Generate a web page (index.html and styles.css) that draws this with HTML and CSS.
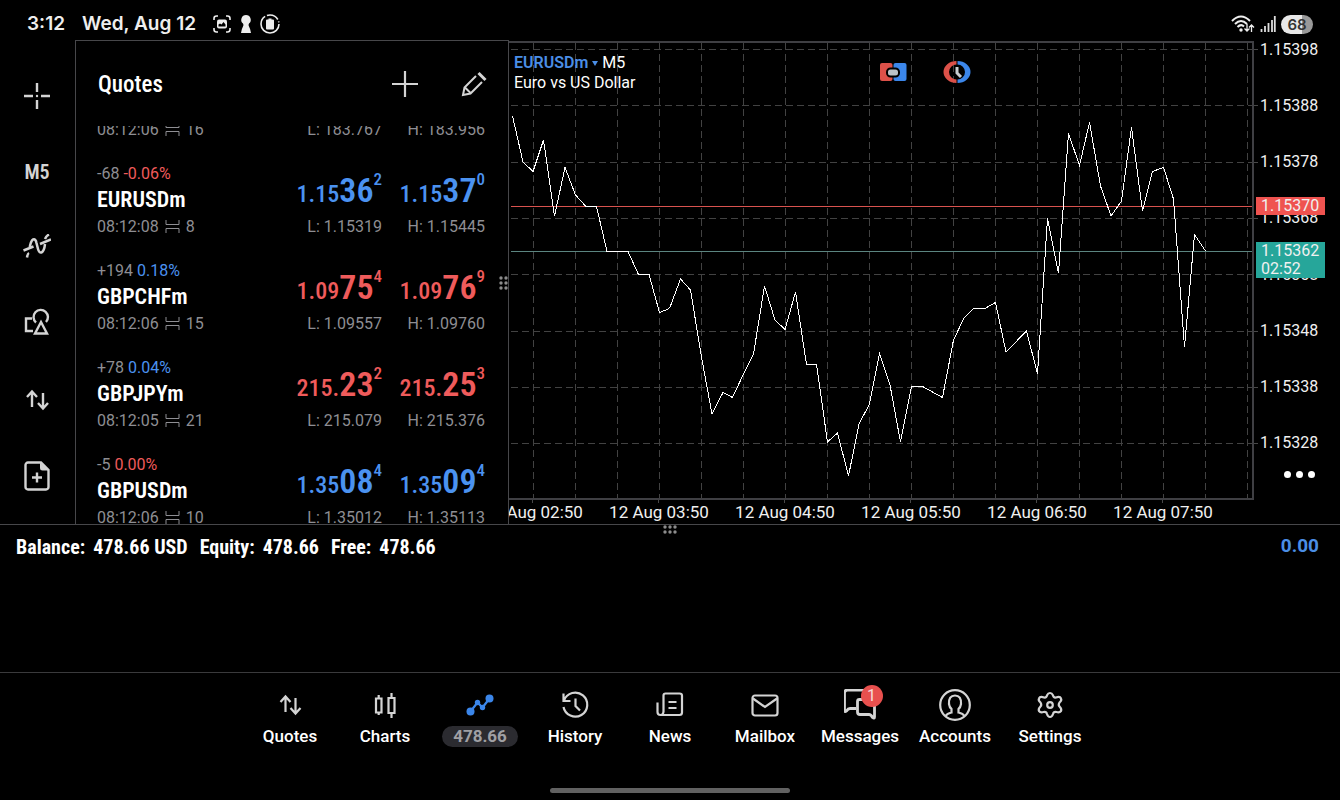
FILE: index.html
```html
<!DOCTYPE html>
<html lang="en">
<head>
<meta charset="utf-8">
<meta name="viewport" content="width=device-width, initial-scale=1">
<title>EURUSDm M5</title>
<link rel="stylesheet" href="styles.css">
</head>
<body>
<div class="app">
  <header class="status">
    <time class="clock">3:12</time>
    <span class="date">Wed, Aug 12</span>
    <span class="status-icons">
      <svg width="20" height="20" viewBox="0 0 20 20"><path d="M2 6V4.500Q2 2 4.500 2H6M14 2h1.500Q18 2 18 4.500V6M18 14v1.500Q18 18 15.500 18H14M6 18H4.500Q2 18 2 15.500V14" fill="none" stroke="#eee" stroke-width="1.600"/><rect x="5" y="5.500" width="10" height="9" rx="2" fill="#eee"/><path d="M6.500 12.500v-2l1.500-1 1.500 1 2-2.500 2 2.500v2z" fill="#000"/></svg>
      <svg width="12" height="20" viewBox="0 0 12 20"><path d="M6 1a4.800 4.800 0 0 1 3 8.500Q8 11 9 12.500q1.500 2.500 2 6.500H1q.5-4 2-6.500 1-1.500 0-3A4.800 4.800 0 0 1 6 1z" fill="#eee"/></svg>
      <svg width="20" height="20" viewBox="0 0 20 20"><circle cx="10" cy="10" r="9" fill="none" stroke="#eee" stroke-width="1.600" stroke-dasharray="37 2 12.500 2 1 2"/><path d="M8.500 4.500h3v1H13q1 0 1 1v8q0 1-1 1H7q-1 0-1-1v-8q0-1 1-1h1.500z" fill="#eee"/></svg>
    </span>
    <span class="status-right">
      <svg width="24" height="20" viewBox="0 0 24 20"><g fill="none" stroke="#eee" stroke-width="2"><path d="M1 7Q10-2 19 7M4 10q6-6 12 0M6.500 13q3.500-3.500 6.500-.5"/><path d="M16 10v7m-2.500-2.500L16 17l2.500-2.500M20.500 18v-7M18 13.500l2.500-2.500 2.500 2.500" stroke-width="1.300"/></g><circle cx="10" cy="16" r="1.700" fill="#eee"/></svg>
      <svg width="16" height="18" viewBox="0 0 16 18"><path d="M1.500 17v-3M5 17v-6M8.500 17V8M12 17V5M14.800 17V1" stroke="#ddd" stroke-width="1.800"/></svg>
      <span class="battery">68</span>
    </span>
  </header>

  <main class="workspace">
    <nav class="tools" aria-label="Chart tools">
      <button aria-label="Crosshair"><svg width="28" height="28" viewBox="0 0 28 28"><path d="M14 1v9M14 18v9M1 14h9M18 14h9" stroke="#d4d4d4" stroke-width="2.400"/><circle cx="14" cy="14" r="1.200" fill="#d4d4d4"/></svg></button>
      <button class="period">M5</button>
      <button aria-label="Indicators"><svg width="28" height="28" viewBox="0 0 28 28"><g fill="none" stroke="#d4d4d4" stroke-width="2.500"><path d="M.5 16.500l10-4M17 10L28 5.500M4 23.500c.3-2 1-4 2-4.500M22 5c1-2.500 2-3.500 4-4.500M6.500 15C8 3.500 12.500 3 13.500 9l1.500 6c1.500 6 6 4.500 7-5"/></g></svg></button>
      <button aria-label="Objects"><svg width="28" height="32" viewBox="0 0 28 32"><g fill="none" stroke="#d4d4d4" stroke-width="2.400"><path d="M9 10.500H3V23h7"/><path d="M13 14.500a7.200 7.200 0 1 1 10-.5"/><path d="M18 14l6 11.500H12z"/></g></svg></button>
      <button aria-label="Trade"><svg width="26" height="22" viewBox="0 0 26 22"><path d="M8 18V3M3 8l5-5.500L13 8M19 4v15M14 14l5 5.500 5-5.500" fill="none" stroke="#d4d4d4" stroke-width="2.400"/></svg></button>
      <button aria-label="New order"><svg width="26" height="30" viewBox="0 0 26 30"><path d="M4 1.500h13L24.500 9v17a2.500 2.500 0 0 1-2.500 2.500H4A2.500 2.500 0 0 1 1.500 26V4A2.500 2.500 0 0 1 4 1.500zM13 11.500v10M8 16.500h10" fill="none" stroke="#d4d4d4" stroke-width="2.400"/><path d="M16 1.500V7q0 2.500 2.500 2.500h6z" fill="#d4d4d4"/></svg></button>
    </nav>

    <section class="quotes">
      <header class="quotes-head">
        <h1>Quotes</h1>
        <button aria-label="Add symbol"><svg width="28" height="28" viewBox="0 0 28 28"><path d="M14 1v26M1 14h26" stroke="#d4d4d4" stroke-width="2.200"/></svg></button>
        <button aria-label="Edit list"><svg width="26" height="26" viewBox="0 0 26 26"><path d="M15 5L3.500 16.500 2 24l7.500-1.500L21 11M4 16.500l5.500 5.500" fill="none" stroke="#d4d4d4" stroke-width="2"/><path d="M17.500 2l7 7" stroke="#d4d4d4" stroke-width="3"/></svg></button>
      </header>
      <div class="list-view">
        <ul class="quote-list">
          <li class="quote cut"><span class="time">08:12:06 <svg class="spread" viewBox="0 0 15 13"><path d="M1 0v4.500h13V0M1 13V8.500h13V13"/></svg> 16</span><span class="low">L: 183.767</span><span class="high">H: 183.956</span></li>
          <li class="quote">
            <span class="change">-68 <b class="down">-0.06%</b></span><span class="symbol">EURUSDm</span>
            <span class="bid up">1.15<b>36</b><sup>2</sup></span><span class="ask up">1.15<b>37</b><sup>0</sup></span>
            <span class="time">08:12:08 <svg class="spread" viewBox="0 0 15 13"><path d="M1 0v4.500h13V0M1 13V8.500h13V13"/></svg> 8</span><span class="low">L: 1.15319</span><span class="high">H: 1.15445</span>
          </li>
          <li class="quote">
            <span class="change">+194 <b class="up">0.18%</b></span><span class="symbol">GBPCHFm</span>
            <span class="bid down">1.09<b>75</b><sup>4</sup></span><span class="ask down">1.09<b>76</b><sup>9</sup></span>
            <span class="time">08:12:06 <svg class="spread" viewBox="0 0 15 13"><path d="M1 0v4.500h13V0M1 13V8.500h13V13"/></svg> 15</span><span class="low">L: 1.09557</span><span class="high">H: 1.09760</span>
          </li>
          <li class="quote">
            <span class="change">+78 <b class="up">0.04%</b></span><span class="symbol">GBPJPYm</span>
            <span class="bid down">215.<b>23</b><sup>2</sup></span><span class="ask down">215.<b>25</b><sup>3</sup></span>
            <span class="time">08:12:05 <svg class="spread" viewBox="0 0 15 13"><path d="M1 0v4.500h13V0M1 13V8.500h13V13"/></svg> 21</span><span class="low">L: 215.079</span><span class="high">H: 215.376</span>
          </li>
          <li class="quote">
            <span class="change">-5 <b class="down">0.00%</b></span><span class="symbol">GBPUSDm</span>
            <span class="bid up">1.35<b>08</b><sup>4</sup></span><span class="ask up">1.35<b>09</b><sup>4</sup></span>
            <span class="time">08:12:06 <svg class="spread" viewBox="0 0 15 13"><path d="M1 0v4.500h13V0M1 13V8.500h13V13"/></svg> 10</span><span class="low">L: 1.35012</span><span class="high">H: 1.35113</span>
          </li>
        </ul>
      </div>
      <svg class="grip side" width="10" height="16" viewBox="0 0 10 16"><g fill="#8c8c8c"><circle cx="2" cy="3" r="1.700"/><circle cx="7" cy="3" r="1.700"/><circle cx="2" cy="8" r="1.700"/><circle cx="7" cy="8" r="1.700"/><circle cx="2" cy="13" r="1.700"/><circle cx="7" cy="13" r="1.700"/></g></svg>
    </section>

    <section class="chart" aria-label="EURUSDm M5 chart">
      <div class="plot">
        <svg class="plot-lines" viewBox="509 40 749 463" preserveAspectRatio="none">
          <g class="grid">
            <path d="M511 49.500H1252M511 105.500H1252M511 162.500H1252M511 218.500H1252M511 274.500H1252M511 331.500H1252M511 387.500H1252M511 443.500H1252"/>
            <path d="M533.500 43V498M575.500 43V498M617.500 43V498M659.500 43V498M701.500 43V498M743.500 43V498M785.500 43V498M827.500 43V498M869.500 43V498M911.500 43V498M953.500 43V498M995.500 43V498M1037.500 43V498M1079.500 43V498M1121.500 43V498M1163.500 43V498M1205.500 43V498M1247.500 43V498"/>
          </g>
          <path class="ticks" d="M1253 49.500h5M1253 105.500h5M1253 162.500h5M1253 218.500h5M1253 331.500h5M1253 387.500h5M1253 443.500h5M532.500 499v4M658.500 499v4M784.500 499v4M910.500 499v4M1036.500 499v4M1162.500 499v4"/>
          <path class="frame" d="M509 42H1253V499H509"/>
          <path class="ask-line" d="M511 206.500H1252"/>
          <path class="bid-line" d="M511 251.500H1252"/>
          <polyline class="price" points="512.500,116 523,162 533,171.500 543.500,140 554.500,216 565,167.500 575.500,195 586,206.500 596.500,206.500 607,251.500 628,251.500 638.500,274.500 649,274.500 659.500,312.500 669.500,308.500 680.500,279 690.500,290 701.500,357 712,414 723,392.500 732.500,397.500 743.500,374 753.500,354 764.500,286 775,320 785,329.500 795.500,292 806.500,364.500 816.500,364.500 827.500,442 837.500,433 848.500,476 859,424 869.500,404 879.500,353.500 890,385 900.500,442 911.500,386.500 922.500,386.500 942.500,397.500 953.500,340 964,318 973.500,308.500 985,308.500 995.500,302.500 1006,352 1026.500,331 1037.500,374 1047.500,218 1058.500,273 1068.500,133.500 1079.500,165.500 1089.500,122.500 1100.500,186 1111,216 1121.500,201 1131.500,127.500 1142.500,211 1152.500,171.500 1163.500,167.500 1173.500,199 1184.500,347 1194.500,234.500 1205.500,251"/>
        </svg>
        <div class="chart-title">
          <div><button class="pair">EURUSDm <i></i></button> M5</div>
          <div>Euro vs US Dollar</div>
        </div>
        <div class="chart-actions">
          <button aria-label="One-click trading"><svg width="28" height="24" viewBox="0 0 28 24"><rect x="1" y="3" width="12.500" height="18" rx="2" fill="#dc5149"/><rect x="14.500" y="3" width="13" height="18" rx="2" fill="#3b86ea"/><rect x="8" y="8.500" width="12" height="8" rx="3.500" fill="#bcc3c8" stroke="#000" stroke-width="2"/></svg></button>
          <button aria-label="Market depth"><svg width="28" height="24" viewBox="0 0 28 24"><path d="M13.500 1A13 11 0 0 0 13.500 23V19.500A7.500 7.500 0 0 1 13.500 4.500z" fill="#dc5149"/><path d="M14.500 1A13 11 0 0 1 14.500 23V19.500A7.500 7.500 0 0 0 14.500 4.500z" fill="#3b86ea"/><path d="M14 7v6l4 4" fill="none" stroke="#c8cdd0" stroke-width="3"/></svg></button>
        </div>
      </div>
      <div class="y-axis">
        <ol><li>1.15398</li><li>1.15388</li><li>1.15378</li><li>1.15368</li><li>1.15358</li><li>1.15348</li><li>1.15338</li><li>1.15328</li></ol>
        <span class="tag ask-tag">1.15370</span>
        <span class="tag bid-tag">1.15362<br>02:52</span>
        <button class="more" aria-label="More"><i></i><i></i><i></i></button>
      </div>
      <ol class="x-axis"><li>12 Aug 02:50</li><li>12 Aug 03:50</li><li>12 Aug 04:50</li><li>12 Aug 05:50</li><li>12 Aug 06:50</li><li>12 Aug 07:50</li></ol>
    </section>
  </main>

  <section class="account">
    <svg class="grip top" width="16" height="10" viewBox="0 0 16 10"><g fill="#8c8c8c"><circle cx="3" cy="2" r="1.700"/><circle cx="8" cy="2" r="1.700"/><circle cx="13" cy="2" r="1.700"/><circle cx="3" cy="7" r="1.700"/><circle cx="8" cy="7" r="1.700"/><circle cx="13" cy="7" r="1.700"/></g></svg>
    <dl>
      <div><dt>Balance:</dt><dd>478.66 USD</dd></div>
      <div><dt>Equity:</dt><dd>478.66</dd></div>
      <div><dt>Free:</dt><dd>478.66</dd></div>
    </dl>
    <output class="profit">0.00</output>
  </section>

  <footer class="bottom">
    <nav class="tabs">
      <a href="#quotes"><svg width="32" height="32" viewBox="0 0 32 32"><path d="M11.500 23V8M6.500 13l5-5.500 5 5.500M21.500 9v15M16.500 19l5 5.500 5-5.500"/></svg><span>Quotes</span></a>
      <a href="#charts"><svg width="32" height="32" viewBox="0 0 32 32"><path d="M7 9.500h5.500v14H7zM9.700 6v3.500M9.700 23.500V26M19.500 9h6v15h-6zM22.500 4v5M22.500 24v5"/></svg><span>Charts</span></a>
      <a href="#trade" class="active"><svg width="32" height="32" viewBox="0 0 32 32"><g fill="#3b86ea" stroke="none"><circle cx="6.500" cy="22.500" r="4"/><circle cx="13.500" cy="13.500" r="2.700"/><circle cx="18.500" cy="18.500" r="2.700"/><circle cx="25.500" cy="9.500" r="4"/></g><path d="M6.500 22.500l7-9 5 5 7-9"/></svg><span>478.66</span></a>
      <a href="#history"><svg width="32" height="32" viewBox="0 0 32 32"><path d="M5 11.500A12 12 0 1 1 4.500 18M4.500 4.500v7.500h7M16.500 9.500v7.500l4.500 4.500"/></svg><span>History</span></a>
      <a href="#news"><svg width="32" height="32" viewBox="0 0 32 32"><path d="M9.500 23V6.500q0-2 2-2h14q2.500 0 2.500 2v17q0 2.500-2.500 2.500H6.500q-3 0-3-3V13.500M9.500 22q0 4-3 4M14.500 13h8M14.500 19h8"/></svg><span>News</span></a>
      <a href="#mailbox"><svg width="32" height="32" viewBox="0 0 32 32"><rect x="3.500" y="6.500" width="25" height="20" rx="2.500"/><path d="M4 9.500l12 8.500 12-8.500"/></svg><span>Mailbox</span></a>
      <a href="#messages"><svg width="32" height="32" viewBox="0 0 32 32"><g stroke-width="2.800"><path d="M12 19.500H6q-2 0-3.500 2.500-2 1.500-2-1V4q0-3 3-3h20q3 0 3 3v6"/><path d="M15.500 10.500h13q2 0 2 2V28q0 2-2 .5-1.500-3-3.500-3H16q-2.500 0-2.500-2.500V12.500q0-2 2-2z"/></g></svg><em>1</em><span>Messages</span></a>
      <a href="#accounts"><svg width="32" height="32" viewBox="0 0 32 32"><circle cx="16" cy="16" r="14.800"/><path d="M6.500 27q1.500-2.500 6-3.500v-3.500q-2-1.500-2.500-5-.5-8.500 6-8.500t6 8.500q-.5 3.500-2.500 5v3.500q4.500 1 6 3.500"/></svg><span>Accounts</span></a>
      <a href="#settings"><svg width="32" height="32" viewBox="0 0 32 32"><path d="M16 4q2 0 2.700 1.800Q19.500 9 22 8.500q4-1.500 5 1 1 2-1.500 4-1.500 2.500 0 4 2.500 2.500 1.500 4.500-1.500 2-4.500 1-3-.5-3.500 2Q18 28 16 28t-3-3q-.5-2.500-3.500-2-3 1-4.500-1-1-2 1.500-4.500 1.500-1.500 0-4-2.500-2-1.500-4 1-2.500 5-1 2.500.5 3.300-2.700Q14 4 16 4z"/><circle cx="16" cy="16" r="2.800"/></svg><span>Settings</span></a>
    </nav>
    <div class="home-bar"></div>
  </footer>
</div>
</body>
</html>
```
FILE: styles.css
```css
* { box-sizing: border-box; }
body { margin: 0; background: #000; color: #fff; font-family: Roboto, "Liberation Sans", sans-serif; font-size: 16px; line-height: 18px; }
button { display: flex; align-items: center; justify-content: center; padding: 0; border: 0; background: none; color: inherit; font: inherit; }
ul, ol, dl, dd, h1 { margin: 0; padding: 0; list-style: none; }
svg { display: block; flex: none; }
.app { display: flex; flex-direction: column; min-height: 100vh; }

.status { display: flex; align-items: center; height: 40px; padding: 8px 27px 0 27px; font: 600 19px/24px Inter, Roboto, sans-serif; color: #eee; }
.date { margin-left: 17px; }
.status-icons { display: flex; gap: 8px; align-items: center; margin-left: 16px; }
.status-right { display: flex; gap: 5px; align-items: center; margin-left: auto; }
.battery { width: 32px; border-radius: 10px; background: linear-gradient(90deg, #e8e8e8 66%, #999 66%); color: #333; font-size: 15px; line-height: 19px; text-align: center; }

.workspace { display: flex; flex: 1; min-height: 484px; }
.tools { display: grid; grid-auto-rows: 76px; width: 75px; padding-top: 18px; }
.tools button { padding-right: 1px; color: #d4d4d4; }
.tools .period { font: 600 20px/24px "Roboto Condensed", "Liberation Sans Narrow", sans-serif; }

.quotes { position: relative; display: flex; flex-direction: column; width: 434px; border: 1px solid #47474a; border-bottom: 0; }
.quotes-head { display: flex; align-items: center; height: 85px; padding: 0 21px 0 22px; gap: 42px; }
.quotes-head h1 { flex: 1; font: 500 23px/28px "Roboto Condensed", "Liberation Sans Narrow", sans-serif; padding-top: 2px; }
.list-view { flex: 1 0 0; overflow: hidden; }
.quote-list { margin-top: -5px; }
.quote { display: grid; grid-template-columns: 1fr 103px 103px; grid-template-rows: 18px 35px 18px; height: 97px; padding: 12px 23px 0 21px; color: #8e8e93; }
.quote.cut { grid-template-rows: 18px; height: 32px; padding-top: 0; }
.quote > * { white-space: nowrap; }
.change { grid-area: 1 / 1; }
.change b { font-weight: 400; }
.symbol { grid-area: 2 / 1; color: #fff; font: 600 22px/34px "Roboto Condensed", "Liberation Sans Narrow", sans-serif; }
.bid, .ask { grid-row: 1 / 3; grid-column: 2; text-align: right; font: 500 24px/50px "Roboto Condensed", "Liberation Sans Narrow", sans-serif; }
.ask { grid-column: 3; }
.bid b, .ask b { font-size: 34px; font-weight: 600; }
.bid sup, .ask sup { font-size: 17px; line-height: 0; vertical-align: 17px; }
.time { grid-column: 1; }
.low, .high { text-align: right; }
.spread { display: inline-block; width: 15px; height: 13px; margin: 0 2px; fill: none; stroke: #8e8e93; vertical-align: -1px; }
.up { color: #4b92f0; }
.down { color: #ef5b5b; }
.grip { position: absolute; }
.grip.side { right: -1px; top: 50%; margin-top: -8px; }
.grip.top { left: 50%; top: 0; margin-left: -8px; }

.chart { display: grid; grid-template: minmax(0, 1fr) 21px / minmax(0, 1fr) 82px; flex: 1; min-width: 0; overflow: hidden; }
.plot { position: relative; }
.plot-lines { position: absolute; inset: 0; width: 100%; height: 100%; fill: none; stroke-width: 1; shape-rendering: crispEdges; }
.plot-lines * { vector-effect: non-scaling-stroke; }
.grid { stroke: #424242; stroke-dasharray: 7 4; }
.ticks { stroke: #484848; }
.frame { stroke: #3f3f43; stroke-width: 2; }
.ask-line { stroke: #d9534f; }
.bid-line { stroke: #5b8580; }
.price { stroke: #fff; }
.chart-title { position: relative; padding: 13px 0 0 5px; line-height: 20px; }
.pair { display: inline-flex; gap: 4px; color: #4b8ee6; font-weight: 600; }
.pair i { border: 3px solid transparent; border-top: 5px solid #4b8ee6; border-bottom: 0; }
.chart-actions { position: absolute; top: 20px; left: 50%; display: flex; gap: 36px; margin-left: -5px; }
.y-axis { position: relative; padding-top: 1px; color: #f0f0f0; }
.y-axis ol { display: flex; flex-direction: column; justify-content: space-between; height: 89%; padding-left: 2px; }
.tag { position: absolute; top: 157px; left: -2px; width: 69px; padding-left: 5px; background: #ef5350; }
.bid-tag { top: 202px; background: #26a69a; }
.more { gap: 5px; margin: 19px 0 0 26px; }
.more i { width: 7px; height: 7px; border-radius: 50%; background: #fff; }
.x-axis { display: grid; grid-template-columns: repeat(6, 1fr); grid-column: 1; margin: 0 32px 0 -39px; color: #f0f0f0; font-size: 17px; text-align: center; white-space: nowrap; }

.account { position: relative; display: flex; justify-content: space-between; align-items: flex-start; height: 148px; padding: 11px 21px 0 16px; border-top: 1px solid #47474a; font-size: 19px; line-height: 22px; font-weight: 700; }
.account dl { display: flex; gap: 12px; font-family: "Roboto Condensed", Roboto, sans-serif; font-size: 20px; }
.account dl div { display: flex; gap: 8px; }
.profit { color: #4b8ee6; line-height: 20px; }

.bottom { display: flex; flex-direction: column; height: 128px; border-top: 1px solid #3a3a3c; }
.tabs { display: grid; grid-template-columns: repeat(9, 95px); justify-content: center; padding-top: 16px; font-weight: 500; font-size: 17px; line-height: 21px; }
.tabs a { position: relative; display: flex; flex-direction: column; align-items: center; gap: 5px; color: #fff; text-decoration: none; }
.tabs svg { fill: none; stroke: #d4d4d4; stroke-width: 2.200; }
.tabs .active svg { stroke: #3b86ea; }
.active span { width: 76px; border-radius: 11px; background: #2b2b30; color: #a0a0a4; text-align: center; font-weight: 700; }
.tabs em { position: absolute; top: -4px; left: 48px; width: 22px; border-radius: 11px; background: #e8504e; color: #f6dada; font-style: normal; font-weight: 400; font-size: 16px; line-height: 22px; text-align: center; }
.home-bar { width: 240px; height: 5px; margin: auto auto 7px; border-radius: 3px; background: #616161; }
```
